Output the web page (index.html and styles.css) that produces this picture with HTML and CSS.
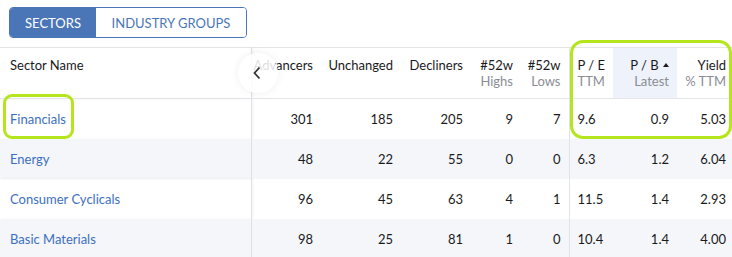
FILE: index.html
```html
<!DOCTYPE html>
<html>
<head>
<meta charset="utf-8">
<link rel="stylesheet" href="styles.css">
</head>
<body>
<div class="page">
  <div class="toolbar">
    <div class="seg">
      <button class="seg-btn active">SECTORS</button>
      <button class="seg-btn">INDUSTRY GROUPS</button>
    </div>
  </div>
  <div class="table-wrap">
    <table class="grid">
      <colgroup>
        <col class="c-name"><col class="c-adv"><col class="c-unc"><col class="c-dec"><col class="c-hi"><col class="c-lo"><col class="c-pe"><col class="c-pb"><col class="c-yld">
      </colgroup>
      <thead>
        <tr>
          <th class="name sticky">Sector Name</th>
          <th class="num">Advancers</th>
          <th class="num">Unchanged</th>
          <th class="num">Decliners</th>
          <th class="num">#52w<span class="sub">Highs</span></th>
          <th class="num">#52w<span class="sub">Lows</span></th>
          <th class="left sep">P / E<span class="sub">TTM</span></th>
          <th class="num sorted">P / B <span class="arrow"></span><span class="sub">Latest</span></th>
          <th class="num last">Yield<span class="sub">% TTM</span></th>
        </tr>
      </thead>
      <tbody>
        <tr>
          <td class="name sticky"><a href="#">Financials</a></td>
          <td class="num">301</td><td class="num">185</td><td class="num">205</td><td class="num">9</td><td class="num">7</td>
          <td class="left sep">9.6</td><td class="num">0.9</td><td class="num last">5.03</td>
        </tr>
        <tr class="alt">
          <td class="name sticky"><a href="#">Energy</a></td>
          <td class="num">48</td><td class="num">22</td><td class="num">55</td><td class="num">0</td><td class="num">0</td>
          <td class="left sep">6.3</td><td class="num">1.2</td><td class="num last">6.04</td>
        </tr>
        <tr>
          <td class="name sticky"><a href="#">Consumer Cyclicals</a></td>
          <td class="num">96</td><td class="num">45</td><td class="num">63</td><td class="num">4</td><td class="num">1</td>
          <td class="left sep">11.5</td><td class="num">1.4</td><td class="num last">2.93</td>
        </tr>
        <tr class="alt">
          <td class="name sticky"><a href="#">Basic Materials</a></td>
          <td class="num">98</td><td class="num">25</td><td class="num">81</td><td class="num">1</td><td class="num">0</td>
          <td class="left sep">10.4</td><td class="num">1.4</td><td class="num last">4.00</td>
        </tr>
      </tbody>
    </table>
    <button class="scroll-btn" aria-label="Scroll left">
      <svg width="10" height="14" viewBox="0 0 10 14"><path d="M7.5 1.5 L2.5 7 L7.5 12.5" fill="none" stroke="#333" stroke-width="1.8"/></svg>
    </button>
  </div>
  <div class="mark mark-name"></div>
  <div class="mark mark-ratios"></div>
</div>
</body>
</html>
```
FILE: styles.css
```css
* { box-sizing: border-box; }
html, body { margin: 0; padding: 0; background: #fff; }
body {
  font-family: Lato, "Open Sans", "Liberation Sans", sans-serif;
  font-size: 13px;
  color: #1a1a1c;
  width: 732px;
  height: 257px;
  overflow: hidden;
}
.page { position: relative; width: 732px; height: 257px; }
.toolbar { height: 47px; padding: 7px 0 0 9px; }
.seg {
  display: inline-flex;
  height: 31px;
  border: 1px solid #4a76b8;
  border-radius: 4px;
  overflow: hidden;
}
.seg-btn {
  font-family: inherit;
  font-size: 13px;
  border: 0;
  margin: 0;
  background: #fff;
  color: #4a76b8;
  height: 29px;
  padding: 0;
  cursor: pointer;
}
.seg-btn:first-child { width: 86px; }
.seg-btn:last-child { width: 150px; }
.seg-btn.active { background: #4a76b8; color: #fff; }

.table-wrap { position: relative; }
.grid {
  border-collapse: collapse;
  table-layout: fixed;
  width: 732px;
  border-top: 1px solid #e3e5e8;
}
.c-name { width: 251px; }
.c-adv { width: 70px; }
.c-unc { width: 80px; }
.c-dec { width: 70px; }
.c-hi { width: 50px; }
.c-lo { width: 48px; }
.c-pe { width: 44px; }
.c-pb { width: 64px; }
.c-yld { width: 55px; }

th {
  font-weight: 400;
  height: 51px;
  vertical-align: top;
  padding: 9px 8px 0 0;
  line-height: 16px;
  border-bottom: 1px solid #e3e5e8;
  white-space: nowrap;
}
th .sub { display: block; color: #8a8d93; }
td {
  height: 40px;
  padding: 1px 8px 0 0;
  line-height: 16px;
  vertical-align: middle;
  white-space: nowrap;
}
.alt td { background: #f4f6fa; }
.num { text-align: right; }
.left { text-align: left; padding-left: 8px; }
.name { text-align: left; padding-left: 10px; }
.sticky { border-right: 1px solid #dfe0e3; box-shadow: 2px 0 3px rgba(0,0,0,0.05); }
.sep { border-left: 1px solid #e2e3e6; }
.last { padding-right: 6px; }
th.sorted { background: #eef2fa; }
.arrow {
  display: inline-block;
  width: 0; height: 0;
  border-left: 3px solid transparent;
  border-right: 3px solid transparent;
  border-bottom: 4px solid #1d1d1f;
  vertical-align: 3px;
  margin-left: 1px;
}
a { color: #3d6fc0; text-decoration: none; }

.scroll-btn {
  position: absolute;
  left: 238px;
  top: 6px;
  width: 40px;
  height: 40px;
  border-radius: 50%;
  border: 0;
  background: rgba(255,255,255,0.85);
  box-shadow: 0 0 8px rgba(0,0,0,0.07);
  display: flex;
  align-items: center;
  justify-content: center;
  padding: 0 2px 0 0;
}

.mark {
  position: absolute;
  border: 3px solid #b5e61d;
  pointer-events: none;
}
.mark-name { left: 3px; top: 94px; width: 71px; height: 45px; border-radius: 9px; }
.mark-ratios { left: 570px; top: 40px; width: 162px; height: 99px; border-radius: 13px; }
```
